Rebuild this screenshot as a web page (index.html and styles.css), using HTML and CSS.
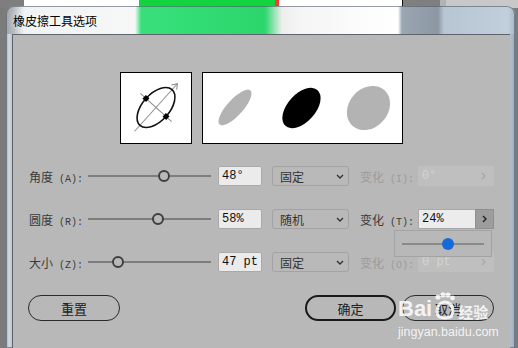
FILE: index.html
```html
<!DOCTYPE html>
<html lang="zh-CN">
<head>
<meta charset="utf-8">
<title>橡皮擦工具选项</title>
<link rel="stylesheet" href="styles.css">
</head>
<body>
<div class="desktop">
  <div class="window">
    <div class="titlebar"><span class="title">橡皮擦工具选项</span></div>
    <div class="client">
      <div class="previews">
        <div class="box small">
          <svg width="70" height="70" viewBox="0 0 70 70">
            <g transform="translate(35 34.5) rotate(-48)">
              <line x1="-32" y1="0" x2="32" y2="0" stroke="#8a8a8a" stroke-width="1"/>
              <polyline points="27,-3.5 32,0 27,3.5" fill="none" stroke="#8a8a8a" stroke-width="1"/>
              <line x1="0" y1="-21" x2="0" y2="21" stroke="#8a8a8a" stroke-width="1"/>
              <ellipse rx="24" ry="13.5" fill="none" stroke="#111" stroke-width="1.6"/>
              <rect x="-2.5" y="-16" width="5" height="5" fill="#000"/>
              <rect x="-2.5" y="11" width="5" height="5" fill="#000"/>
            </g>
          </svg>
        </div>
        <div class="box wide">
          <svg width="199" height="70" viewBox="0 0 199 70">
            <ellipse cx="32" cy="34.5" rx="23" ry="8" transform="rotate(-48 32 34.5)" fill="#b3b3b3"/>
            <ellipse cx="98.5" cy="35" rx="24" ry="14" transform="rotate(-48 98.5 35)" fill="#000"/>
            <ellipse cx="165.5" cy="35" rx="24" ry="19.5" transform="rotate(-48 165.5 35)" fill="#b3b3b3"/>
          </svg>
        </div>
      </div>

      <div class="rows">
        <div class="row">
          <span class="label">角度<span class="lat"> (A):</span></span>
          <div class="slider"><span class="thumb" style="left:61.8%"></span></div>
          <div class="field">48°</div>
          <div class="select"><span>固定</span><svg class="chev" width="8" height="5" viewBox="0 0 8 5"><polyline points="1,1 4,4 7,1" fill="none" stroke="#333" stroke-width="1.4"/></svg></div>
          <span class="vlabel disabled">变化<span class="lat"> (I):</span></span>
          <div class="vfield disabled"><span>0°</span><svg width="5" height="8" viewBox="0 0 5 8"><polyline points="1,1 4,4 1,7" fill="none" stroke="#a6a6a6" stroke-width="1.2"/></svg></div>
        </div>
        <div class="row">
          <span class="label">圆度<span class="lat"> (R):</span></span>
          <div class="slider"><span class="thumb" style="left:56.9%"></span></div>
          <div class="field">58%</div>
          <div class="select"><span>随机</span><svg class="chev" width="8" height="5" viewBox="0 0 8 5"><polyline points="1,1 4,4 7,1" fill="none" stroke="#333" stroke-width="1.4"/></svg></div>
          <span class="vlabel">变化<span class="lat"> (T):</span></span>
          <div class="vfield active">
            <span class="vinput">24%</span>
            <span class="vbtn"><svg width="5" height="8" viewBox="0 0 5 8"><polyline points="1,1 4,4 1,7" fill="none" stroke="#222" stroke-width="1.4"/></svg></span>
          </div>
        </div>
        <div class="row">
          <span class="label">大小<span class="lat"> (Z):</span></span>
          <div class="slider"><span class="thumb" style="left:24.4%"></span></div>
          <div class="field">47 pt</div>
          <div class="select"><span>固定</span><svg class="chev" width="8" height="5" viewBox="0 0 8 5"><polyline points="1,1 4,4 7,1" fill="none" stroke="#333" stroke-width="1.4"/></svg></div>
          <span class="vlabel disabled">变化<span class="lat"> (O):</span></span>
          <div class="vfield disabled"><span>0 pt</span><svg width="5" height="8" viewBox="0 0 5 8"><polyline points="1,1 4,4 1,7" fill="none" stroke="#a6a6a6" stroke-width="1.2"/></svg></div>
        </div>
      </div>

      <div class="buttons">
        <button class="btn">重置</button>
        <span class="spacer"></span>
        <button class="btn default">确定</button>
        <button class="btn">取消</button>
      </div>

      <div class="popup">
        <div class="popup-track"><span class="popup-thumb" style="left:56%"></span></div>
      </div>

      <div class="watermark">
        <div class="wm-logo">
          <span class="wm-bai">Bai</span>
          <svg class="wm-paw" width="24" height="28" viewBox="0 0 24 28">
            <circle cx="5" cy="5" r="2.6" fill="#fff"/>
            <circle cx="10" cy="2.8" r="2.6" fill="#fff"/>
            <circle cx="15" cy="3" r="2.6" fill="#fff"/>
            <circle cx="19.5" cy="6" r="2.4" fill="#fff"/>
            <path d="M4 20 C4 13 8 10 12 10 C16 10 20 13 20 20 C20 25 16 26 12 26 C8 26 4 25 4 20 Z" fill="none" stroke="#fff" stroke-width="3"/>
          </svg>
          <span class="wm-cn">经验</span>
        </div>
        <div class="wm-url">jingyan.baidu.com</div>
      </div>
    </div>
  </div>
</div>
</body>
</html>
```

FILE: styles.css
```css
html, body {
  margin: 0;
  padding: 0;
}

body {
  background: #7b7b7b;
  font-family: "Noto Sans CJK SC", "Liberation Sans", sans-serif;
}

.desktop {
  width: 518px;
  height: 348px;
  overflow: hidden;
  box-sizing: border-box;
  padding: 6px 3px 0 6px;
  background:
    linear-gradient(to right,
      #7e7e7e 0 24px,
      #ffffff 24px 139px,
      #12d43f 139px 275px,
      #ff3b30 275px 279px,
      #ffffff 279px 402px,
      #111111 402px 403px,
      #7f7f7f 403px 440px,
      #b3b3b3 440px 446px,
      #c8c8c8 446px) top left / 100% 8px no-repeat,
    #7b7b7b;
}

.window {
  width: 509px;
  height: 342px;
  box-sizing: border-box;
  padding: 0 5px 0 6px;
  border-radius: 8px 8px 0 0;
  display: flex;
  flex-direction: column;
  background:
    linear-gradient(to right,
      #9da3aa 0,
      #b9bdc2 8px,
      #f0f2f4 18px,
      #f7f7f7 129px,
      #3ade7c 135px,
      #35df78 164px,
      #2cd66c 259px,
      #eeeeee 276px,
      #f5f5f5 294px,
      #ffffff 392px,
      #9aa6b2 396px,
      #8c97a3 432px,
      #b8c6d4 438px,
      #c1cedb 502px,
      #a9b7c5 509px) top left / 100% 28px no-repeat,
    linear-gradient(to right,
      #a3aeb9 0,
      #d3d9df 3px,
      #bcc6d0 6px,
      #bcc6d0 502px,
      #9dadbd 509px);
  box-shadow: inset 0 0 0 1px rgba(70, 80, 90, 0.55);
}

.titlebar {
  height: 28px;
  flex: none;
  display: flex;
  align-items: center;
  padding-left: 1px;
}

.title {
  font-size: 12px;
  color: #000;
  text-shadow: 0 0 6px rgba(255, 255, 255, 0.9);
}

.client {
  flex: 1;
  position: relative;
  background: #b8b8b8;
  border-top: 1px solid #5d646b;
  border-left: 1px solid #5d646b;
}

.previews {
  display: flex;
  justify-content: center;
  gap: 10px;
  padding-top: 37px;
}

.box {
  box-sizing: border-box;
  height: 72px;
  background: #fff;
  border: 1px solid #000;
}

.box svg {
  display: block;
}

.box.small {
  width: 72px;
}

.box.wide {
  width: 201px;
}

.rows {
  display: flex;
  flex-direction: column;
  gap: 23px;
  margin-top: 22px;
  padding-left: 16px;
}

.row {
  display: flex;
  align-items: center;
  height: 20px;
}

.label,
.vlabel {
  font-size: 12px;
  color: #3a3a3a;
  white-space: nowrap;
}

.lat {
  font-family: "Liberation Mono", monospace;
  font-size: 10px;
}

.label {
  width: 59px;
}

.slider {
  position: relative;
  width: 123px;
  height: 20px;
  background: linear-gradient(#7d7d7d, #7d7d7d) center / 100% 2px no-repeat;
}

.thumb {
  position: absolute;
  top: 50%;
  width: 12px;
  height: 12px;
  box-sizing: border-box;
  border: 2.5px solid #3f3f3f;
  border-radius: 50%;
  background: #b8b8b8;
  transform: translate(-50%, -50%);
}

.field {
  margin-left: 7px;
  width: 44px;
  height: 20px;
  box-sizing: border-box;
  padding-left: 3px;
  background: #ebebeb;
  border: 1px solid #a9a9a9;
  border-radius: 2px;
  font: 12px/18px "Liberation Mono", monospace;
  color: #111;
  white-space: nowrap;
}

.select {
  margin-left: 10px;
  width: 77px;
  height: 20px;
  box-sizing: border-box;
  padding: 0 4px 0 7px;
  display: flex;
  align-items: center;
  justify-content: space-between;
  border: 1px solid #a3a3a3;
  border-radius: 3px;
  background: #b9b9b9;
  font-size: 12px;
  color: #333;
}

.chev {
  display: block;
}

.vlabel {
  margin-left: 11px;
  width: 58px;
}

.vlabel.disabled {
  color: #9b9b9b;
}

.vfield {
  width: 76px;
  height: 20px;
  box-sizing: border-box;
  display: flex;
  align-items: center;
  font: 12px "Liberation Mono", monospace;
}

.vfield.disabled {
  justify-content: space-between;
  padding: 0 8px 0 4px;
  background: #bfbfbf;
  color: #d4d4d4;
}

.vfield svg {
  display: block;
}

.vinput {
  flex: 1;
  height: 100%;
  box-sizing: border-box;
  padding-left: 3px;
  background: #ececec;
  border: 1px solid #a9a9a9;
  border-right: none;
  line-height: 18px;
  color: #111;
}

.vbtn {
  width: 19px;
  height: 100%;
  box-sizing: border-box;
  display: flex;
  align-items: center;
  justify-content: center;
  background: #9d9d9d;
  border: 1px solid #8f8f8f;
}

.buttons {
  display: flex;
  align-items: center;
  margin-top: 23px;
  padding: 0 16px 0 15px;
}

.spacer {
  flex: 1;
}

.btn {
  width: 92px;
  height: 26px;
  box-sizing: border-box;
  padding: 0;
  border: 1.5px solid #2a2a2a;
  border-radius: 13px;
  background: transparent;
  font-family: "Noto Sans CJK SC", sans-serif;
  font-size: 13px;
  color: #222;
}

.btn.default {
  width: 91px;
  margin-right: 6px;
  border: 2px solid #1a1a1a;
}

.popup {
  position: absolute;
  left: 381px;
  top: 195px;
  width: 98px;
  height: 27px;
  box-sizing: border-box;
  padding: 0 7px;
  display: flex;
  align-items: center;
  border: 1px solid #a3a3a3;
  background: #b8b8b8;
}

.popup-track {
  position: relative;
  flex: 1;
  height: 2px;
  background: #8a8a8a;
}

.popup-thumb {
  position: absolute;
  top: 50%;
  width: 12px;
  height: 12px;
  border-radius: 50%;
  background: #166ad8;
  transform: translate(-50%, -50%);
}

.watermark {
  position: absolute;
  left: 385px;
  top: 256px;
  color: rgba(255, 255, 255, 0.85);
  pointer-events: none;
}

.wm-logo {
  display: flex;
  align-items: flex-end;
  height: 29px;
}

.wm-bai {
  font: bold 22px/1 "Liberation Sans", sans-serif;
}

.wm-paw {
  display: block;
  margin: 0 1px 0 1px;
  opacity: 0.85;
}

.wm-cn {
  font-size: 15px;
  font-weight: bold;
  line-height: 1.1;
}

.wm-url {
  margin-top: 6px;
  font: 12.5px/1 "Liberation Sans", sans-serif;
}
```
